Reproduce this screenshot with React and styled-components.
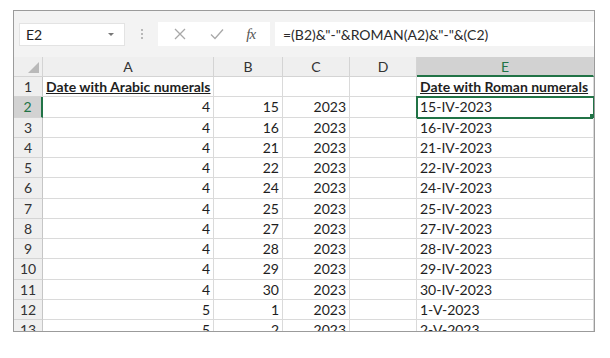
import React from "react";
import styled, { createGlobalStyle } from "styled-components";

const GlobalStyle = createGlobalStyle`
  body {
    margin: 0;
    background: #ffffff;
    font-family: Lato, "Open Sans", sans-serif;
  }
`;

const Frame = styled.div`
  margin: 10px 0 0 13px;
  width: 580px;
  height: 320px;
  border: 1px solid #9b9b9b;
  overflow: hidden;
  background: #ffffff;
`;

const Toolbar = styled.div`
  height: 46px;
  background: #f3f3f3;
  display: flex;
  align-items: center;
  padding: 0 0 0 5px;
`;

const NameBox = styled.div`
  width: 106px;
  height: 23px;
  background: #fff;
  border: 1px solid #e3e3e3;
  box-sizing: border-box;
  display: flex;
  align-items: center;
  justify-content: space-between;
  padding: 0 10px 0 6px;
  font-size: 14px;
  color: #222;
`;

const Caret = styled.span`
  width: 0;
  height: 0;
  border-left: 3px solid transparent;
  border-right: 3px solid transparent;
  border-top: 3px solid #777;
`;

const Dots = styled.div`
  width: 33px;
  display: flex;
  flex-direction: column;
  align-items: center;
  gap: 2px;
  span {
    width: 2px;
    height: 2px;
    background: #b8b8b8;
  }
`;

const FxBox = styled.div`
  width: 112px;
  height: 24px;
  background: #fff;
  box-sizing: border-box;
  display: flex;
  align-items: center;
  justify-content: space-around;
  padding: 0 4px;
`;

const Fx = styled.span`
  font-family: "Liberation Serif", serif;
  font-style: italic;
  font-size: 15px;
  color: #555;
  letter-spacing: -1px;
`;

const Formula = styled.div`
  flex: 1;
  height: 24px;
  margin-left: 5px;
  background: #fff;
  display: flex;
  align-items: center;
  padding-left: 8px;
  font-size: 14px;
  color: #2a2a2a;
`;

const Grid = styled.div`
  display: grid;
  grid-template-columns: 29px 171px 69px 67px 67px 177px;
  grid-template-rows: 20px;
  grid-auto-rows: 20.25px;
`;

const Cell = styled.div`
  box-sizing: border-box;
  border-right: 1px solid #dadada;
  border-bottom: 1px solid #dadada;
  font-size: 14px;
  color: #1e1e1e;
  display: flex;
  align-items: center;
  justify-content: ${({ $right }) => ($right ? "flex-end" : "flex-start")};
  padding: 0 3px;
  white-space: nowrap;
  overflow: hidden;
  font-weight: ${({ $bold }) => ($bold ? 700 : 400)};
  text-decoration: ${({ $bold }) => ($bold ? "underline" : "none")};
  position: relative;
`;

const Selected = styled(Cell)`
  outline: 2px solid #217346;
  outline-offset: -1px;
  &::after {
    content: "";
    position: absolute;
    right: -3px;
    bottom: -3px;
    width: 5px;
    height: 5px;
    background: #217346;
    border: 1px solid #fff;
  }
`;

const ColHead = styled.div`
  box-sizing: border-box;
  background: ${({ $active }) => ($active ? "#d2d2d2" : "#efefef")};
  color: ${({ $active }) => ($active ? "#217346" : "#333")};
  border-right: 1px solid #d4d4d4;
  border-bottom: ${({ $active }) => ($active ? "2px solid #217346" : "1px solid #d4d4d4")};
  display: flex;
  align-items: center;
  justify-content: center;
  font-size: 14px;
  position: relative;
`;

const RowHead = styled.div`
  box-sizing: border-box;
  background: ${({ $active }) => ($active ? "#d2d2d2" : "#efefef")};
  color: ${({ $active }) => ($active ? "#217346" : "#333")};
  border-right: ${({ $active }) => ($active ? "2px solid #217346" : "1px solid #c6c6c6")};
  border-bottom: 1px solid #d4d4d4;
  display: flex;
  align-items: center;
  justify-content: center;
  font-size: 14px;
`;

const Corner = styled(ColHead)`
  justify-content: flex-end;
  align-items: flex-end;
  padding: 0 3px 3px 0;
`;

const rows = [
  [4, 15], [4, 16], [4, 21], [4, 22], [4, 24], [4, 25],
  [4, 27], [4, 28], [4, 29], [4, 30], [5, 1], [5, 2],
];
const roman = { 4: "IV", 5: "V" };

export default function App() {
  return (
    <>
      <GlobalStyle />
      <Frame>
        <Toolbar>
          <NameBox>
            E2
            <Caret />
          </NameBox>
          <Dots>
            <span />
            <span />
            <span />
          </Dots>
          <FxBox>
            <svg width="14" height="14" viewBox="0 0 14 14">
              <path d="M2 2 L12 12 M12 2 L2 12" stroke="#a8a8a8" strokeWidth="1.3" fill="none" />
            </svg>
            <svg width="16" height="14" viewBox="0 0 16 14">
              <path d="M2 7.5 L6 11.5 L14 2.5" stroke="#a8a8a8" strokeWidth="1.3" fill="none" />
            </svg>
            <Fx>fx</Fx>
          </FxBox>
          <Formula>=(B2)&amp;"-"&amp;ROMAN(A2)&amp;"-"&amp;(C2)</Formula>
        </Toolbar>
        <Grid>
          <Corner>
            <svg width="11" height="11" viewBox="0 0 11 11">
              <path d="M11 0 L11 11 L0 11 Z" fill="#b9b9b9" />
            </svg>
          </Corner>
          {["A", "B", "C", "D", "E"].map((c) => (
            <ColHead key={c} $active={c === "E"}>
              {c}
            </ColHead>
          ))}
          <RowHead>1</RowHead>
          <Cell $bold>Date with Arabic numerals</Cell>
          <Cell />
          <Cell />
          <Cell />
          <Cell $bold>Date with Roman numerals</Cell>
          {rows.map(([m, d], i) => {
            const E = i === 0 ? Selected : Cell;
            return (
              <React.Fragment key={i}>
                <RowHead $active={i === 0}>{i + 2}</RowHead>
                <Cell $right>{m}</Cell>
                <Cell $right>{d}</Cell>
                <Cell $right>2023</Cell>
                <Cell />
                <E>{`${d}-${roman[m]}-2023`}</E>
              </React.Fragment>
            );
          })}
        </Grid>
      </Frame>
    </>
  );
}
